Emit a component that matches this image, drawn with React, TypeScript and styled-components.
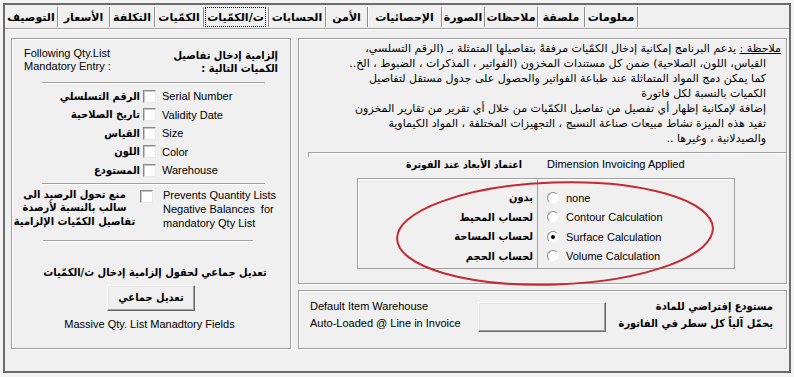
import React from 'react';
import styled, { createGlobalStyle } from 'styled-components';

const AR = `"DejaVu Sans", "Noto Sans", sans-serif`;
const ARB = `"DejaVu Sans Condensed", "DejaVu Sans", "Noto Sans", sans-serif`;
const EN = `"Liberation Sans", Arial, sans-serif`;

const Global = createGlobalStyle`
  html, body { margin: 0; padding: 0; background: #f4f4f4; }
  body { width: 794px; height: 377px; overflow: hidden; }
  * { box-sizing: border-box; }
`;

const Frame = styled.div`
  margin: 3px 0 0 3px;
  width: 788px;
  height: 370px;
  border: 2px solid #6c6c6c;
  background: #f0f0f0;
  display: flex;
  flex-direction: column;
`;

const TabStrip = styled.div`
  height: 24px;
  display: flex;
  align-items: stretch;
  border-bottom: 1px solid #a0a0a0;
  box-shadow: 0 1px 0 #ffffff;
`;

const Tab = styled.div<{ $w: number }>`
  width: ${p => p.$w}px;
  flex: none;
  display: flex;
  align-items: center;
  justify-content: center;
  border-right: 1px solid #8e8e8e;
  box-shadow: 1px 0 0 #ffffff;
  margin: 2px 0 1px 0;
  font-family: ${AR};
  font-weight: bold;
  font-size: 11px;
  direction: rtl;
  color: #000;
`;

const Focus = styled.span`
  flex: 1;
  align-self: stretch;
  margin: 0 2px 0 1px;
  border: 1px dotted #000;
  display: flex;
  align-items: center;
  justify-content: center;
`;

const Body = styled.div`
  flex: 1;
  display: flex;
  gap: 7px;
  padding: 9px 0 0 6px;
`;

const GroupBox = styled.div`
  border: 1px solid #a0a0a0;
  box-shadow: inset 1px 1px 0 #ffffff, 1px 1px 0 #ffffff;
`;

const LeftBox = styled(GroupBox)`
  width: 280px;
  height: 311px;
  display: flex;
  flex-direction: column;
`;

const RightCol = styled.div`
  width: 489px;
  display: flex;
  flex-direction: column;
  gap: 6px;
`;

const NotesBox = styled(GroupBox)`
  position: relative;
  height: 246px;
  display: flex;
  flex-direction: column;
`;

const WarehouseBox = styled(GroupBox)`
  height: 59px;
  display: flex;
  align-items: flex-start;
  padding: 7px 13px 0 11px;
`;

const EnText = styled.div`
  font-family: ${EN};
  font-size: 11px;
  color: #000;
`;

const ArText = styled.div<{ $size?: number }>`
  font-family: ${ARB};
  font-stretch: condensed;
  font-size: ${p => p.$size ?? 11}px;
  font-weight: bold;
  direction: rtl;
  color: #000;
`;

const Header = styled.div`
  display: flex;
  justify-content: space-between;
  margin-top: 8px;
  padding: 0 12px 0 12px;
`;

const HeaderEn = styled(EnText)`
  line-height: 13px;
`;

const HeaderAr = styled(ArText)`
  line-height: 13px;
  padding-top: 2px;
  text-align: right;
`;

const Rule = styled.div<{ $l: number; $r: number; $t: number }>`
  height: 2px;
  border-top: 1px solid #a0a0a0;
  border-bottom: 1px solid #ffffff;
  margin: ${p => p.$t}px ${p => p.$r}px 0 ${p => p.$l}px;
`;

const CheckList = styled.div`
  margin-top: 3px;
  display: grid;
  grid-template-columns: 128px 13px 1fr;
  grid-auto-rows: 18.5px;
  column-gap: 3px;
  align-items: center;
`;

const RowAr = styled(ArText)`
  text-align: right;
  white-space: nowrap;
`;

const RowEn = styled(EnText)`
  padding-left: 3px;
  white-space: nowrap;
`;

const Check = styled.span`
  width: 13px;
  height: 13px;
  background: #ffffff;
  border-top: 1px solid #8a8a8a;
  border-left: 1px solid #8a8a8a;
  border-bottom: 1px solid #e8e8e8;
  border-right: 1px solid #e8e8e8;
  box-shadow: inset 1px 1px 0 #c8c8c8;
`;

const PreventRow = styled.div`
  margin-top: 3px;
  display: grid;
  grid-template-columns: 125px 13px 1fr;
  column-gap: 3px;
  align-items: start;
`;

const PreventAr = styled(ArText)`
  text-align: center;
  line-height: 13.5px;
  white-space: nowrap;
`;

const PreventEn = styled(EnText)`
  line-height: 14px;
  padding-left: 7px;
  white-space: nowrap;
`;

const PreventCheck = styled(Check)`
  margin-top: 2px;
`;

const MassTitle = styled(ArText)`
  margin-top: 24px;
  line-height: 14px;
  text-align: center;
  padding-left: 8px;
`;

const RaisedButton = styled.div`
  background: #f0f0f0;
  border-top: 1px solid #ffffff;
  border-left: 1px solid #ffffff;
  border-right: 1px solid #6a6a6a;
  border-bottom: 1px solid #6a6a6a;
  box-shadow: inset -1px -1px 0 #a0a0a0, inset 1px 1px 0 #e3e3e3;
`;

const MassButton = styled(RaisedButton)`
  align-self: flex-start;
  margin: 5px 0 0 95px;
  width: 88px;
  height: 26px;
  display: flex;
  align-items: center;
  justify-content: center;
  font-family: ${ARB};
  font-stretch: condensed;
  font-size: 11px;
  font-weight: bold;
  direction: rtl;
`;

const MassCaption = styled(EnText)`
  margin-top: 7px;
  line-height: 13px;
  text-align: center;
  padding-right: 3px;
`;

const Notes = styled.div`
  padding: 2px 20px 0 0;
  display: flex;
  flex-direction: column;
  align-items: flex-end;
`;

const NoteLine = styled.div<{ $first?: boolean }>`
  font-family: ${AR};
  font-size: 11px;
  line-height: 15px;
  direction: rtl;
  white-space: nowrap;
  color: #000;
  margin-right: ${p => (p.$first ? -15 : 0)}px;
`;

const NoteLabel = styled.span`
  text-decoration: underline;
`;

const SectionRule = styled.div`
  margin: 6px 0 0 9px;
  height: 5px;
  border-top: 1px solid #a0a0a0;
  border-left: 1px solid #a0a0a0;
  box-shadow: inset 1px 1px 0 #ffffff;
`;

const DimHeader = styled.div`
  margin-left: 58px;
  width: 378px;
  display: grid;
  grid-template-columns: 180px 1fr;
  line-height: 14px;
  align-items: center;
`;

const DimHeaderAr = styled(ArText)`
  text-align: right;
  padding-right: 15px;
  white-space: nowrap;
`;

const DimHeaderEn = styled(EnText)`
  padding-left: 10px;
  white-space: nowrap;
`;

const DimTable = styled.div`
  margin: 7px 0 0 58px;
  width: 378px;
  height: 91px;
  border: 1px solid #a0a0a0;
  box-shadow: inset 1px 1px 0 #ffffff;
  display: grid;
  grid-template-columns: 180px 1fr;
`;

const DimCol = styled.div<{ $divider?: boolean }>`
  padding-top: 9px;
  border-right: ${p => (p.$divider ? '1px solid #a0a0a0' : 'none')};
  display: flex;
  flex-direction: column;
`;

const DimRowAr = styled(ArText)`
  height: 19.5px;
  line-height: 19.5px;
  text-align: right;
  padding-right: 4px;
  white-space: nowrap;
`;

const DimRowEn = styled(EnText)`
  height: 19.5px;
  display: flex;
  align-items: center;
  gap: 7px;
  padding-left: 9px;
  white-space: nowrap;
`;

const Radio = styled.span<{ $on?: boolean }>`
  width: 12px;
  height: 12px;
  flex: none;
  border-radius: 50%;
  background: #ffffff;
  border-top: 1px solid #8a8a8a;
  border-left: 1px solid #8a8a8a;
  border-bottom: 1px solid #f4f4f4;
  border-right: 1px solid #f4f4f4;
  display: flex;
  align-items: center;
  justify-content: center;
  &::after {
    content: '';
    width: 4px;
    height: 4px;
    border-radius: 50%;
    background: ${p => (p.$on ? '#000' : 'transparent')};
  }
`;

const Annotation = styled.svg`
  position: absolute;
  left: 90px;
  top: 138px;
  width: 332px;
  height: 116px;
  overflow: visible;
  pointer-events: none;
`;

const WhEn = styled(EnText)`
  width: 168px;
  flex: none;
  line-height: 17px;
  white-space: nowrap;
`;

const WhField = styled(RaisedButton)`
  width: 128px;
  height: 30px;
  flex: none;
  margin-top: 4px;
`;

const WhAr = styled(ArText)`
  flex: 1;
  min-width: 0;
  text-align: right;
  line-height: 17px;
  white-space: nowrap;
`;

const tabs = [
  { label: 'التوصيف', w: 53 },
  { label: 'الأسعار', w: 52 },
  { label: 'التكلفة', w: 45 },
  { label: 'الكمّيات', w: 49 },
  { label: 'ت/الكمّيات', w: 65, active: true },
  { label: 'الحسابات', w: 57 },
  { label: 'الأمن', w: 42 },
  { label: 'الإحصائيات', w: 74 },
  { label: 'الصورة', w: 43 },
  { label: 'ملاحظات', w: 53 },
  { label: 'ملصقة', w: 47 },
  { label: 'معلومات', w: 53 },
];

const fields = [
  ['الرقم التسلسلي', 'Serial Number'],
  ['تاريخ  الصلاحية', 'Validity Date'],
  ['القياس', 'Size'],
  ['اللون', 'Color'],
  ['المستودع', 'Warehouse'],
];

const dims = [
  ['بدون', 'none', false],
  ['لحساب المحيط', 'Contour Calculation', false],
  ['لحساب المساحة', 'Surface Calculation', true],
  ['لحساب الحجم', 'Volume Calculation', false],
] as const;

export default function App() {
  return (
    <>
      <Global />
      <Frame>
        <TabStrip>
          {tabs.map(t => (
            <Tab key={t.label} $w={t.w}>
              {t.active ? <Focus>{t.label}</Focus> : t.label}
            </Tab>
          ))}
        </TabStrip>
        <Body>
          <LeftBox>
            <Header>
              <HeaderEn>
                Following Qty.List
                <br />
                Mandatory Entry :
              </HeaderEn>
              <HeaderAr>
                إلزامية إدخال تفاصيل
                <br />
                الكميات التالية :
              </HeaderAr>
            </Header>
            <Rule $t={7} $l={30} $r={25} />
            <CheckList>
              {fields.map(([ar, en]) => (
                <React.Fragment key={en}>
                  <RowAr>{ar}</RowAr>
                  <Check />
                  <RowEn>{en}</RowEn>
                </React.Fragment>
              ))}
            </CheckList>
            <Rule $t={3} $l={30} $r={25} />
            <PreventRow>
              <PreventAr>
                منع تحول الرصيد الى
                <br />
                سالب بالنسبة لأرصدة
                <br />
                تفاصيل الكمّيات الإلزامية
              </PreventAr>
              <PreventCheck />
              <PreventEn>
                Prevents Quantity Lists
                <br />
                Negative Balances&nbsp; for
                <br />
                mandatory Qty List
              </PreventEn>
            </PreventRow>
            <Rule $t={10} $l={31} $r={37} />
            <MassTitle>تعديل جماعي لحقول إلزامية إدخال ت/الكمّيات</MassTitle>
            <MassButton>تعديل جماعي</MassButton>
            <MassCaption>Massive Qty. List Manadtory Fields</MassCaption>
          </LeftBox>
          <RightCol>
            <NotesBox>
              <Notes>
                <NoteLine $first>
                  <NoteLabel>ملاحظة :</NoteLabel> يدعم البرنامج إمكانية إدخال الكمّيات مرفقةً بتفاصيلها المتمثلة بـ (الرقم التسلسي،
                </NoteLine>
                <NoteLine>القياس، اللون، الصلاحية) ضمن كل مستندات المخزون (الفواتير ، المذكرات ، الضبوط ، الخ..</NoteLine>
                <NoteLine>كما يمكن دمج المواد المتماثلة عند طباعة الفواتير والحصول على جدول مستقل لتفاصيل</NoteLine>
                <NoteLine>الكميات بالنسبة لكل فاتورة</NoteLine>
                <NoteLine>إضافة لإمكانية إظهار أي تفصيل من تفاصيل الكمّيات من خلال أي تقرير من تقارير المخزون</NoteLine>
                <NoteLine>تفيد هذه الميزة نشاط مبيعات صناعة النسيج ، التجهيزات المختلفة ، المواد الكيماوية</NoteLine>
                <NoteLine>والصيدلانية ، وغيرها ..</NoteLine>
              </Notes>
              <SectionRule />
              <DimHeader>
                <DimHeaderAr $size={10.5}>اعتماد الأبعاد عند الفوترة</DimHeaderAr>
                <DimHeaderEn>Dimension Invoicing Applied</DimHeaderEn>
              </DimHeader>
              <DimTable>
                <DimCol $divider>
                  {dims.map(([ar]) => (
                    <DimRowAr key={ar}>{ar}</DimRowAr>
                  ))}
                </DimCol>
                <DimCol>
                  {dims.map(([, en, on]) => (
                    <DimRowEn key={en}>
                      <Radio $on={on} />
                      {en}
                    </DimRowEn>
                  ))}
                </DimCol>
              </DimTable>
              <Annotation viewBox="0 0 332 116">
                <ellipse
                  cx="166"
                  cy="56.5"
                  rx="158"
                  ry="51"
                  transform="rotate(-2 166 56.5)"
                  fill="none"
                  stroke="#c42a30"
                  strokeWidth="2"
                />
              </Annotation>
            </NotesBox>
            <WarehouseBox>
              <WhEn>
                Default Item Warehouse
                <br />
                Auto-Loaded @ Line in Invoice
              </WhEn>
              <WhField />
              <WhAr>
                مستودع إفتراضي للمادة
                <br />
                يحمّل آلياً كل سطر في الفاتورة
              </WhAr>
            </WarehouseBox>
          </RightCol>
        </Body>
      </Frame>
    </>
  );
}
